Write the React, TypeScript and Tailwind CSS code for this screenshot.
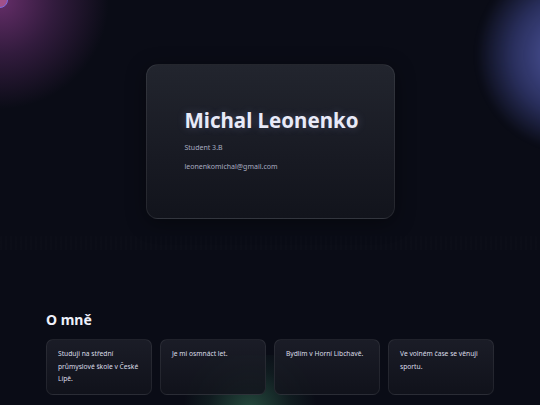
import React from "react";

export default function App() {
  const items = [
    "Studuji na střední průmyslové škole v České Lípě.",
    "Je mi osmnáct let.",
    "Bydlím v Horní Libchavě.",
    "Ve volném čase se věnuji sportu.",
  ];
  return (
    <div
      className="relative w-[540px] h-[405px] overflow-hidden bg-[#0a0c16]"
      style={{ fontFamily: '"Noto Sans", "Open Sans", sans-serif' }}
    >
      {/* decorative blobs */}
      <div className="absolute -left-[110px] -top-[110px] w-[220px] h-[220px] rounded-full bg-[radial-gradient(circle,rgba(140,60,140,0.7)_0%,rgba(110,50,120,0.4)_35%,rgba(10,12,22,0)_70%)]" />
      <div className="absolute -left-[8px] -top-[8px] w-[16px] h-[16px] rounded-full border border-[#7a6ae0] bg-[#a0508a]" />
      <div className="absolute left-[478px] -top-[40px] w-[190px] h-[190px] rounded-full bg-[radial-gradient(circle,rgba(110,120,220,0.75)_0%,rgba(80,90,180,0.45)_45%,rgba(10,12,22,0)_72%)] blur-[3px]" />
      <div className="absolute left-[175px] top-[355px] w-[150px] h-[110px] rounded-full bg-[radial-gradient(circle,rgba(70,150,110,0.45)_0%,rgba(40,90,70,0.2)_45%,rgba(10,12,22,0)_72%)]" />
      {/* faint band */}
      <div className="absolute left-0 top-[236px] w-full h-[14px] bg-[repeating-linear-gradient(90deg,rgba(255,255,255,0.008)_0px,rgba(255,255,255,0.008)_2px,transparent_2px,transparent_5px)]" />

      <div className="relative flex flex-col">
        <div className="flex justify-center pt-[64px]">
          <div className="w-[249px] h-[155px] rounded-[12px] border border-[rgba(255,255,255,0.08)] bg-[linear-gradient(180deg,#22252e_0%,#181a23_60%,#12141c_100%)] pl-[38px] pt-[41px] shadow-[0_4px_20px_rgba(0,0,0,0.4)]">
            <div
              className="text-[20.5px] font-bold leading-[28px] text-[#e8eaf8]"
              style={{ textShadow: "0 0 8px rgba(180,190,255,0.25)" }}
            >
              Michal Leonenko
            </div>
            <div className="mt-[9px] text-[7px] leading-[10px] text-[#a8acc0]">Student 3.B</div>
            <div className="mt-[9px] text-[7px] leading-[10px] text-[#a8acc0]">leonenkomichal@gmail.com</div>
          </div>
        </div>

        <div className="pl-[46px] pt-[92px]">
          <div className="text-[14px] font-bold leading-[18px] text-[#eef0fa]">O mně</div>
          <div className="mt-[10px] flex gap-[8px]">
            {items.map((t) => (
              <div
                key={t}
                className="w-[106px] h-[56px] rounded-[7px] border border-[rgba(255,255,255,0.07)] bg-[linear-gradient(180deg,rgba(30,32,42,0.85)_0%,rgba(18,20,28,0.85)_100%)] pl-[11px] pr-[8px] pt-[8px] text-[6.7px] leading-[12.7px] text-[#dcdee8]"
              >
                {t}
              </div>
            ))}
          </div>
        </div>
      </div>
    </div>
  );
}
